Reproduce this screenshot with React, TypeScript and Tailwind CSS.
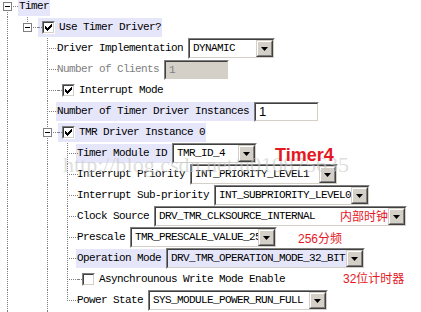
import type { JSX, ReactNode } from 'react'

type CellKind = 'pass' | 'blank' | 'tee' | 'end' | 'root'

const dot = 'border-dotted border-[#808080]'

const TreeCell = ({ kind, box }: { kind: CellKind; box?: boolean }): JSX.Element => (
  <div className="relative h-[21px] w-[20px] shrink-0">
    {(kind === 'pass' || kind === 'tee') && (
      <div className={`absolute left-[9px] top-0 h-[21px] border-l ${dot}`} />
    )}
    {kind === 'end' && <div className={`absolute left-[9px] top-0 h-[11px] border-l ${dot}`} />}
    {kind === 'root' && <div className={`absolute left-[9px] top-[11px] h-[10px] border-l ${dot}`} />}
    {(kind === 'tee' || kind === 'end' || kind === 'root') && (
      <div className={`absolute left-[9px] right-0 top-[10px] border-t ${dot}`} />
    )}
    {box && (
      <div className="absolute left-[5px] top-[6px] flex h-[9px] w-[9px] items-center justify-center border border-[#808080] bg-white">
        <div className="h-px w-[5px] bg-black" />
      </div>
    )}
  </div>
)

const CheckCell = ({ checked }: { checked: boolean }): JSX.Element => (
  <div className="relative h-[19px] w-[20px] shrink-0">
    <div className={`absolute left-0 top-[9px] w-[4px] border-t ${dot}`} />
    <div className="absolute left-[4px] top-[3px] h-[13px] w-[13px] border border-[#808080] border-b-white border-r-white">
      <div className="flex h-full w-full items-center justify-center border border-[#404040] border-b-[#d4d0c8] border-r-[#d4d0c8] bg-white">
        {checked && (
          <svg width="7" height="7" viewBox="0 0 7 7">
            <path d="M0 2h1v1h1v1h1V3h1V2h1V1h1V0h1v3H6v1H5v1H4v1H3v1H2V6H1V5H0z" fill="#000" />
          </svg>
        )}
      </div>
    </div>
  </div>
)

const DropButton = (): JSX.Element => (
  <div className="h-[17px] w-[17px] shrink-0 border border-[#d4d0c8] border-b-[#404040] border-r-[#404040]">
    <div className="flex h-full w-full items-center justify-center border border-white border-b-[#808080] border-r-[#808080] bg-[#d4d0c8]">
      <svg width="7" height="4" viewBox="0 0 7 4">
        <path d="M0 0h7L3.5 4z" fill="#000" />
      </svg>
    </div>
  </div>
)

const Select = ({ w, value, bg = 'bg-white' }: { w: string; value: string; bg?: string }): JSX.Element => (
  <div className={`flex h-[21px] shrink-0 border border-[#808080] border-b-white border-r-white ${w}`}>
    <div className={`flex min-w-0 flex-1 border border-[#404040] border-b-[#d4d0c8] border-r-[#d4d0c8] ${bg}`}>
      <div className="min-w-0 flex-1 overflow-hidden whitespace-nowrap pl-[3px] leading-[17px]">{value}</div>
      <DropButton />
    </div>
  </div>
)

const Input = ({ value, disabled }: { value: string; disabled?: boolean }): JSX.Element => (
  <div className="flex h-[20px] w-[65px] shrink-0 border border-[#808080] border-b-white border-r-white">
    <div
      className={`flex-1 border border-[#404040] border-b-[#d4d0c8] border-r-[#d4d0c8] pl-[3px] leading-[16px] ${
        disabled ? 'bg-[#d4d0c8] text-[#808080]' : "bg-white font-['Liberation_Sans',sans-serif] text-[13px]"
      }`}
    >
      {value}
    </div>
  </div>
)

interface IRowProps {
  cells: [CellKind, boolean?][]
  label: string
  leaf?: boolean
  check?: boolean
  hl?: boolean
  gray?: boolean
  control?: ReactNode
}

const Row = ({ cells, label, leaf, check, hl, gray, control }: IRowProps): JSX.Element => (
  <div className="flex h-[21px] items-center">
    {cells.map(([kind, box], i) => (
      <TreeCell key={i} kind={kind} box={box} />
    ))}
    <div className={`flex h-[19px] items-center ${leaf ? '-ml-[2px]' : ''} ${hl ? 'bg-[#e6e6fa]' : ''}`}>
      {check !== undefined && <CheckCell checked={check} />}
      <span
        className={`whitespace-nowrap pl-px leading-[19px] ${control ? 'pr-[5px]' : 'pr-px'} ${
          gray ? 'text-[#808080]' : ''
        }`}
      >
        {label}
      </span>
    </div>
    {control}
  </div>
)

const L2: [CellKind, boolean?][] = [['pass'], ['blank'], ['tee']]
const L3: [CellKind, boolean?][] = [['pass'], ['blank'], ['pass'], ['tee']]

export default function App(): JSX.Element {
  return (
    <div className="relative h-[312px] w-[421px] overflow-hidden bg-white font-['Liberation_Mono',monospace] text-[11px] tracking-[-0.6px] text-black">
      <div className="-ml-[2px] -mt-[4px] flex flex-col">
        <Row cells={[['root', true]]} label="Timer" hl />
        <Row cells={[['pass'], ['end', true]]} check label="Use Timer Driver?" hl />
        <Row cells={L2} leaf label="Driver Implementation" control={<Select w="w-[87px]" value="DYNAMIC" />} />
        <Row cells={L2} leaf gray label="Number of Clients" control={<Input value="1" disabled />} />
        <Row cells={L2} check label="Interrupt Mode" />
        <Row cells={L2} leaf hl label="Number of Timer Driver Instances" control={<Input value="1" />} />
        <Row cells={[['pass'], ['blank'], ['tee', true]]} check hl label="TMR Driver Instance 0" />
        <Row cells={L3} leaf hl label="Timer Module ID" control={<Select w="w-[85px]" value="TMR_ID_4" />} />
        <Row cells={L3} leaf label="Interrupt Priority" control={<Select w="w-[148px]" value="INT_PRIORITY_LEVEL1" />} />
        <Row
          cells={L3}
          leaf
          label="Interrupt Sub-priority"
          control={<Select w="w-[156px]" value="INT_SUBPRIORITY_LEVEL0" />}
        />
        <Row
          cells={L3}
          leaf
          label="Clock Source"
          control={<Select w="w-[253px]" value="DRV_TMR_CLKSOURCE_INTERNAL" />}
        />
        <Row cells={L3} leaf label="Prescale" control={<Select w="w-[147px]" value="TMR_PRESCALE_VALUE_256" />} />
        <Row
          cells={L3}
          leaf
          hl
          label="Operation Mode"
          control={<Select w="w-[199px]" value="DRV_TMR_OPERATION_MODE_32_BIT" bg="bg-[#e6e6fa]" />}
        />
        <Row cells={L3} check={false} label="Asynchrounous Write Mode Enable" />
        <Row
          cells={[['pass'], ['blank'], ['pass'], ['end']]}
          leaf
          label="Power State"
          control={<Select w="w-[180px]" value="SYS_MODULE_POWER_RUN_FULL" />}
        />
        <Row cells={[['pass'], ['blank'], ['tee', true]]} check hl label="TMR Driver Instance 1" />
      </div>

      {/* watermark */}
      <div className="pointer-events-none absolute left-[63px] top-[148px] whitespace-nowrap font-['Liberation_Serif',serif] text-[22px] tracking-normal text-[#c8c8c8]/60">
        http://blog.csdn.net/u010875635
      </div>

      {/* red notes */}
      <div className="absolute left-[275px] top-[142px] font-['Liberation_Sans',sans-serif] text-[18px] font-bold tracking-normal text-[#e5171f]">
        Timer4
      </div>
      <div className="absolute left-[340px] top-[208px] font-['Liberation_Sans','Noto_Sans_CJK_SC',sans-serif] text-[12px] tracking-normal text-[#e5171f]">
        内部时钟
      </div>
      <div className="absolute left-[298px] top-[230px] font-['Liberation_Sans','Noto_Sans_CJK_SC',sans-serif] text-[12px] tracking-normal text-[#e5171f]">
        256分频
      </div>
      <div className="absolute left-[343px] top-[270px] font-['Liberation_Sans','Noto_Sans_CJK_SC',sans-serif] text-[12px] tracking-normal text-[#e5171f]">
        32位计时器
      </div>
    </div>
  )
}
